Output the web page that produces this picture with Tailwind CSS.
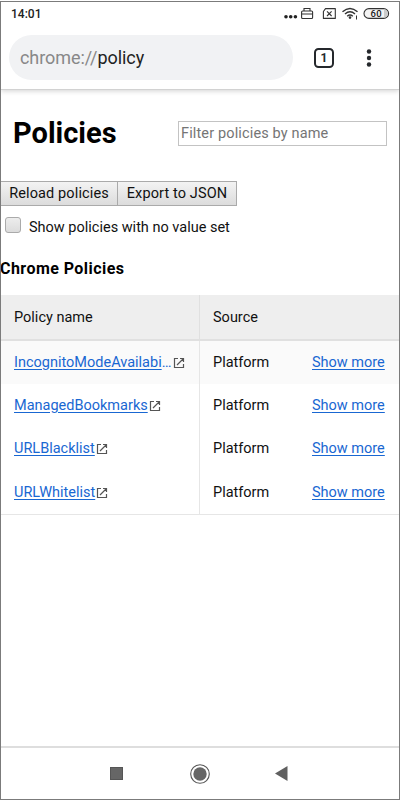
<!DOCTYPE html>
<html lang="en">
<head>
<meta charset="utf-8">
<title>Policies</title>
<script src="https://cdn.jsdelivr.net/npm/@tailwindcss/browser@4"></script>
</head>
<body class="bg-white">
<svg class="hidden">
  <symbol id="ext" viewBox="0 0 12 12"><path d="M5 1.5H1.5V10.5H10.5V7M7 1.5H10.5V5M10.5 1.5L4 8" fill="none" stroke="#555" stroke-width="1.2"/></symbol>
</svg>
<div class="w-[400px] h-[800px] pt-px overflow-hidden">
<div class="h-[799px] border border-[#7b7b7b] flex flex-col font-[Roboto,sans-serif] text-[14.5px] text-[#111] whitespace-nowrap overflow-hidden">
  <header class="h-[88px] shrink-0 border-b border-[#d2d2d2] shadow-[0_1px_5px_rgba(0,0,0,0.18)] flex flex-col">
    <div class="h-[24px] flex items-center pl-[10px] pr-[9px] justify-between">
      <span class="text-[12px] font-medium text-[#222] leading-[24px]">14:01</span>
      <svg width="108" height="16" viewBox="282 6 108 16" fill="none" stroke="#333" stroke-width="1.1">
        <g fill="#222" stroke="none"><circle cx="286" cy="16.7" r="1.8"/><circle cx="290.7" cy="16.7" r="1.8"/><circle cx="295.4" cy="16.7" r="1.8"/></g>
        <rect x="301.6" y="11" width="11" height="7.5" rx="1"/><path d="M304 11V8.5H310V11M301.6 14H312.6"/>
        <path d="M325.5 8.6H335.3V18.4H323.4V11.5Z" stroke-linejoin="round"/><path d="M327 11.4L331.6 16M331.6 11.4L327 16"/>
        <g stroke-width="1.4"><path d="M342.5 11.8Q350 5.2 357.5 11.8M345 14Q350 9.6 355 14M347.2 16.2Q350 13.8 352.8 16.2"/></g><circle cx="350" cy="17.6" r="1.3" fill="#333" stroke="none"/><path d="M356.5 15.5V19.5" stroke-width="1"/>
        <rect x="364" y="8.6" width="24.6" height="9.8" rx="4.9" fill="#f4f4f4"/><path d="M384 9.2V17.8Q388 17 388 13.5T384 9.2" fill="#ccc" stroke="none"/>
        <text x="370.6" y="17" font-size="9.5" font-weight="500" fill="#222" stroke="none" font-family="Roboto" textLength="11">60</text>
      </svg>
    </div>
    <div class="h-[62px] flex items-center pl-2 pt-[1px]">
      <div class="w-[284px] h-[45px] rounded-full bg-[#f1f2f4] flex items-center pl-[11px] text-[18px] tracking-[-0.07px] text-[#222]"><span class="text-[#888]">chrome://</span><span>policy</span></div>
      <div class="ml-[21px] w-[20px] h-[20px] rounded-[4.5px] border-2 border-[#25282c] flex items-center justify-center text-[12px] font-bold text-[#25282c]">1</div>
      <svg class="ml-[32px]" width="6" height="20" viewBox="0 0 6 20" fill="#25282c"><circle cx="3" cy="3.5" r="2.2"/><circle cx="3" cy="10" r="2.2"/><circle cx="3" cy="16.5" r="2.2"/></svg>
    </div>
  </header>
  <main class="flex-1 flex flex-col min-h-0">
    <div class="flex items-center justify-between h-[86px] pl-[12px] pr-[12px]">
      <h1 class="text-[29px] font-bold text-black pt-[2px]">Policies</h1>
      <input class="w-[209px] h-[25px] border border-[#c3c3c3] px-[2px] text-[14.5px] tracking-[0.14px] placeholder:text-[#757575]" placeholder="Filter policies by name">
    </div>
    <div class="mt-[5px] flex h-[25px] -ml-px tracking-[0.12px]">
      <button class="w-[118px] border border-[#aaa] bg-linear-to-b from-[#f3f3f3] to-[#dcdcdc]">Reload policies</button>
      <button class="w-[120px] -ml-px border border-[#aaa] bg-linear-to-b from-[#f3f3f3] to-[#dcdcdc]">Export to JSON</button>
    </div>
    <div class="h-[44px] flex items-center pl-[4px]">
      <span class="w-[16px] h-[16px] -mt-[7px] rounded-[3px] border border-[#aaa] bg-linear-to-b from-[#ededed] to-[#dcdcdc]"></span>
      <span class="ml-[8px]">Show policies with no value set</span>
    </div>
    <h2 class="h-[45px] pt-[7px] -ml-px text-[16px] tracking-[0.45px] font-bold text-black">Chrome Policies</h2>
    <div class="grid grid-cols-[199px_112px_1fr] grid-rows-[46px_43px_43px_44px_43px] border-b border-[#e6e6e6] [&>*]:flex [&>*]:items-center [&>*]:pl-[13px]">
      <div class="bg-[#eee] border-r border-b-2 border-[#e0e0e0] pt-[2px]">Policy name</div>
      <div class="bg-[#eee] border-b-2 border-[#e0e0e0] pt-[2px]">Source</div>
      <div class="bg-[#eee] border-b-2 border-[#e0e0e0]"></div>

      <div class="bg-[#fafafa] border-r border-[#e6e6e6]"><a class="text-[#1967d2] underline underline-offset-2">IncognitoModeAvailabi</a><span class="text-[#1967d2]">…</span><svg class="ml-[2px]" width="12" height="12"><use href="#ext"/></svg></div>
      <div class="bg-[#fafafa]">Platform</div>
      <div class="bg-[#fafafa] !pl-0"><a class="text-[#1967d2] underline underline-offset-2">Show more</a></div>

      <div class="border-r border-[#e6e6e6]"><a class="text-[#1967d2] underline underline-offset-2">ManagedBookmarks</a><svg class="ml-px" width="12" height="12"><use href="#ext"/></svg></div>
      <div>Platform</div>
      <div class="!pl-0"><a class="text-[#1967d2] underline underline-offset-2">Show more</a></div>

      <div class="border-r border-[#e6e6e6]"><a class="text-[#1967d2] underline underline-offset-2">URLBlacklist</a><svg class="ml-px" width="12" height="12"><use href="#ext"/></svg></div>
      <div>Platform</div>
      <div class="!pl-0"><a class="text-[#1967d2] underline underline-offset-2">Show more</a></div>

      <div class="border-r border-[#e6e6e6]"><a class="text-[#1967d2] underline underline-offset-2">URLWhitelist</a><svg class="ml-px" width="12" height="12"><use href="#ext"/></svg></div>
      <div>Platform</div>
      <div class="!pl-0"><a class="text-[#1967d2] underline underline-offset-2">Show more</a></div>
    </div>
  </main>
  <nav class="h-[53px] shrink-0 border-t-2 border-[#dedede] flex items-center pl-[109px]">
    <span class="w-[13px] h-[13px] bg-[#666] border border-[#555]"></span>
    <svg class="ml-[67px]" width="20" height="20" viewBox="0 0 20 20"><circle cx="10" cy="10" r="9.3" fill="none" stroke="#555" stroke-width="1.1"/><circle cx="10" cy="10" r="6.7" fill="#666"/></svg>
    <svg class="ml-[65px]" width="13" height="15" viewBox="0 0 13 15"><path d="M0 7.5L12.5 0V15Z" fill="#606060"/></svg>
  </nav>
</div>
</div>
</body>
</html>
